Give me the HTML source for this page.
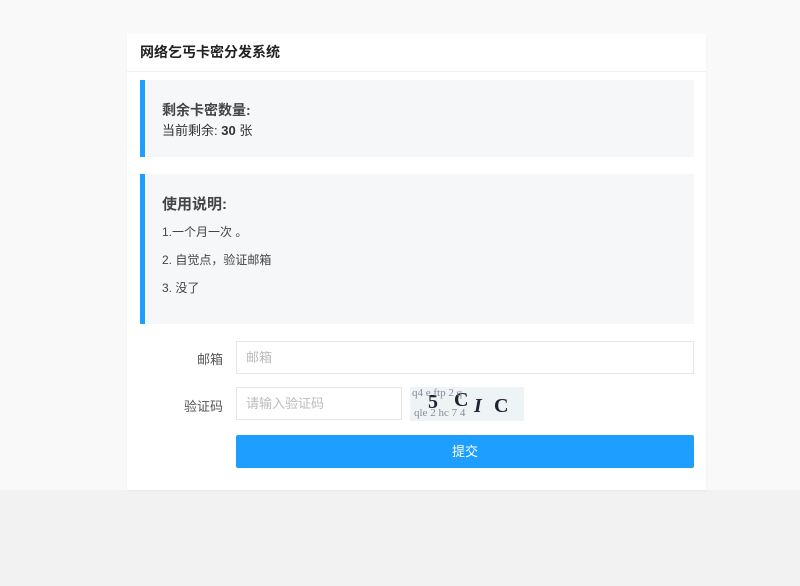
<!DOCTYPE html>
<html><head><meta charset="utf-8"><style>
body{margin:0;width:800px;height:586px;background:#f2f2f2;font-family:"Liberation Sans","Noto Sans CJK SC",sans-serif;position:relative;overflow:hidden}
.top{position:absolute;left:0;top:0;width:800px;height:490px;background:#f9f9f9}
.card{position:absolute;left:127px;top:34px;width:579px;height:456px;background:#fff;box-shadow:0 1px 2px rgba(0,0,0,.05)}
.hd{height:37px;border-bottom:1px solid #f0f0f0;padding-left:13px;line-height:37px;font-size:14px;font-weight:bold;color:#222}
.q{position:absolute;left:13px;width:549px;background:#f6f7f9;border-left:5px solid #1e9fff;color:#333}
.lbl{position:absolute;font-size:13px;color:#555;text-align:right;width:60px}
.in{position:absolute;border:1px solid #e6e6e6;height:31px;font-size:13px;color:#bbb;line-height:31px;padding-left:9px;box-sizing:border-box;height:33px}
.btn{position:absolute;left:109px;top:401px;width:458px;height:33px;background:#1e9fff;color:#fff;font-size:13px;text-align:center;line-height:33px;border-radius:2px}
</style></head><body>
<div class="top"></div>
<div class="card">
<div class="hd">网络乞丐卡密分发系统</div>
<div class="q" style="top:46px;height:77px">
<div style="position:absolute;left:17px;top:20px;font-size:14px;font-weight:bold;color:#444">剩余卡密数量:</div>
<div style="position:absolute;left:17px;top:40px;font-size:13px">当前剩余: <b>30</b> 张</div>
</div>
<div class="q" style="top:140px;height:150px">
<div style="position:absolute;left:17px;top:19px;font-size:15px;font-weight:bold;color:#444">使用说明:</div>
<div style="position:absolute;left:17px;top:49px;font-size:12px;color:#444">1.一个月一次 。</div>
<div style="position:absolute;left:17px;top:77px;font-size:12px;color:#444">2. 自觉点，验证邮箱</div>
<div style="position:absolute;left:17px;top:105px;font-size:12px;color:#444">3. 没了</div>
</div>
<div class="lbl" style="left:36px;top:315px">邮箱</div>
<div class="in" style="left:109px;top:307px;width:458px">邮箱</div>
<div class="lbl" style="left:36px;top:362px">验证码</div>
<div class="in" style="left:109px;top:353px;width:166px">请输入验证码</div>
<div style="position:absolute;left:283px;top:353px;width:114px;height:34px;background:#eef4f6;font-family:'Liberation Serif',serif;color:#223;overflow:hidden">
<span style="position:absolute;left:18px;top:4px;font-size:20px;font-weight:bold">5</span>
<span style="position:absolute;left:44px;top:2px;font-size:20px;font-weight:bold">C</span>
<span style="position:absolute;left:64px;top:8px;font-size:20px;font-style:italic;font-weight:bold">I</span>
<span style="position:absolute;left:84px;top:8px;font-size:20px;font-weight:bold">C</span>
<span style="position:absolute;left:2px;top:0;font-size:11px;color:#889">q4 e ftp 2 q</span>
<span style="position:absolute;left:4px;top:20px;font-size:11px;color:#889">qle 2 hc  7 4</span>
</div>
<div class="btn">提交</div>
</div>
</body></html>
